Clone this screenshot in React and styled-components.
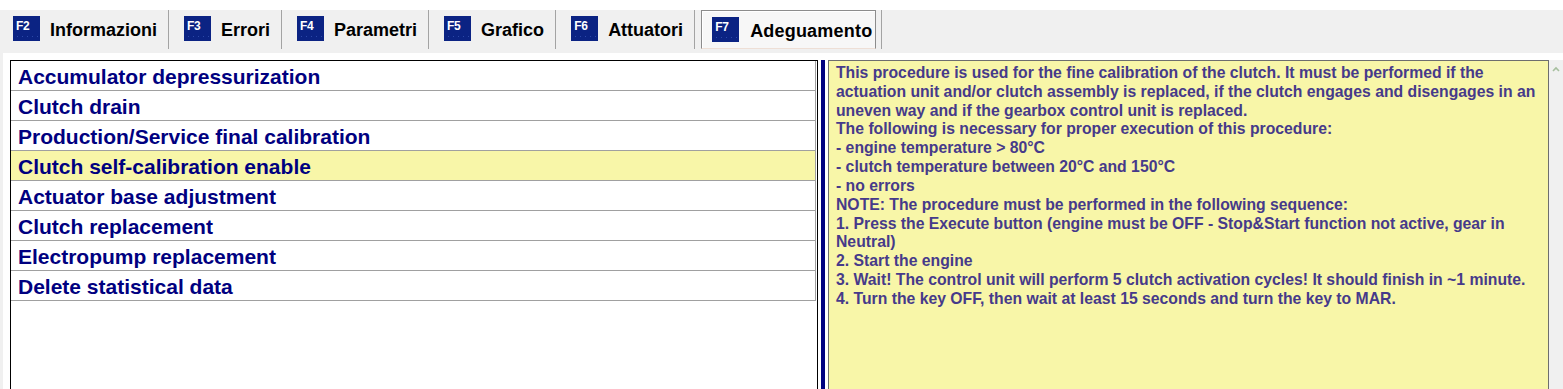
import React from "react";
import styled, { createGlobalStyle } from "styled-components";

const GlobalStyle = createGlobalStyle`
  html, body {
    margin: 0;
    padding: 0;
    background: #ffffff;
    font-family: "Liberation Sans", Arial, sans-serif;
  }
`;

const Page = styled.div`
  width: 1563px;
  height: 389px;
  overflow: hidden;
  padding-top: 10px;
  box-sizing: border-box;
  background: #ffffff;
`;

// tab strip
const TabBar = styled.div`
  display: flex;
  align-items: flex-start;
  height: 43px;
  background: #f0f0f0;
`;

const Tab = styled.div`
  display: flex;
  align-items: flex-start;
  height: 39px;
  box-sizing: border-box;
  padding: ${(p) => (p.$active ? "0 5px 0 6px" : p.$first ? "0 11px 0 13px" : "0 11px 0 15px")};
  border-right: 1px solid #a3a3a3;
`;

const ActiveBox = styled.div`
  display: flex;
  align-items: flex-start;
  height: 39px;
  box-sizing: border-box;
  padding: 0 3px 0 10px;
  background: #f7f7f7;
  border: 1px solid #8c8c8c;
  border-bottom-color: #eedfd6;
  box-shadow: inset 1px 1px 0 #ffffff;
`;

const KeyIcon = styled.div`
  width: 27px;
  height: 25px;
  margin-top: 6px;
  box-sizing: border-box;
  padding: 4px 0 0 3px;
  background-color: #0b2383;
  background-image: radial-gradient(circle, #2a47a8 0.7px, transparent 0.9px);
  background-size: 5px 3px;
  background-position: 2px 19px;
  background-repeat: repeat-x;
  color: #ffffff;
  font-size: 12px;
  line-height: 12px;
  font-weight: bold;
  letter-spacing: -0.3px;
`;

const TabLabel = styled.span`
  margin: 9px 0 0 ${(p) => (p.$active ? "11px" : "10px")};
  font-size: 18px;
  line-height: 22px;
  font-weight: bold;
  color: #000000;
  white-space: nowrap;
  letter-spacing: ${(p) => (p.$active ? "0.2px" : "0")};
`;

// body
const Body = styled.div`
  background: #f0f0f0;
  height: 336px;
`;

const Content = styled.div`
  display: flex;
  align-items: stretch;
  margin-left: 3px;
  height: 100%;
  box-sizing: border-box;
  padding: 7px 0 0 7px;
  background: #ffffff;
`;

const ListPanel = styled.div`
  width: 808px;
  box-sizing: border-box;
  border: 1px solid #000000;
  border-bottom: none;
  background: #ffffff;
`;

const Row = styled.div`
  height: 30px;
  box-sizing: border-box;
  padding: 3px 0 0 7px;
  margin-right: 1px;
  line-height: 25px;
  font-size: 21px;
  font-weight: bold;
  color: #000080;
  background: ${(p) => (p.$selected ? "#f8f6a8" : "#ffffff")};
  border-bottom: 1px solid #a0a0a0;
  border-right: 1px solid #a0a0a0;
  white-space: nowrap;
`;

const Divider = styled.div`
  width: 4px;
  margin: 0 3px;
  background: #000080;
`;

const InfoPanel = styled.div`
  width: 721px;
  box-sizing: border-box;
  border: 1px solid #6e6e6e;
  border-bottom: none;
  background: #f8f6a8;
  padding: 3px 0 0 7px;
  color: #463a8a;
  font-size: 15.75px;
  line-height: 18.83px;
  font-weight: bold;
`;

const InfoLine = styled.div`
  white-space: nowrap;
`;

const ScrollTrack = styled.div`
  width: 14px;
  background: #f0f0f0;
  display: flex;
  justify-content: center;
  padding-top: 6px;
  box-sizing: border-box;
`;

const procedures = [
  "Accumulator depressurization",
  "Clutch drain",
  "Production/Service final calibration",
  "Clutch self-calibration enable",
  "Actuator base adjustment",
  "Clutch replacement",
  "Electropump replacement",
  "Delete statistical data",
];

const tabs = [
  { key: "F2", label: "Informazioni" },
  { key: "F3", label: "Errori" },
  { key: "F4", label: "Parametri" },
  { key: "F5", label: "Grafico" },
  { key: "F6", label: "Attuatori" },
  { key: "F7", label: "Adeguamento", active: true },
];

const info = [
  "This procedure is used for the fine calibration of the clutch. It must be performed if the",
  "actuation unit and/or clutch assembly is replaced, if the clutch engages and disengages in an",
  "uneven way and if the gearbox control unit is replaced.",
  "The following is necessary for proper execution of this procedure:",
  "- engine temperature > 80°C",
  "- clutch temperature between 20°C and 150°C",
  "- no errors",
  "NOTE:  The procedure must be performed in the following sequence:",
  "1. Press the Execute button (engine must be OFF - Stop&Start function not active, gear in",
  "Neutral)",
  "2. Start the engine",
  "3. Wait! The control unit will perform 5 clutch activation cycles! It should finish in ~1 minute.",
  "4. Turn the key OFF, then wait at least 15 seconds and turn the key to MAR.",
];

export default function App() {
  return (
    <>
      <GlobalStyle />
      <Page>
        <TabBar>
          {tabs.map((t, i) =>
            t.active ? (
              <Tab key={t.key} $active>
                <ActiveBox>
                  <KeyIcon>{t.key}</KeyIcon>
                  <TabLabel $active>{t.label}</TabLabel>
                </ActiveBox>
              </Tab>
            ) : (
              <Tab key={t.key} $first={i === 0}>
                <KeyIcon>{t.key}</KeyIcon>
                <TabLabel>{t.label}</TabLabel>
              </Tab>
            )
          )}
        </TabBar>
        <Body>
          <Content>
            <ListPanel>
              {procedures.map((p, i) => (
                <Row key={p} $selected={i === 3}>
                  {p}
                </Row>
              ))}
            </ListPanel>
            <Divider />
            <InfoPanel>
              {info.map((line, i) => (
                <InfoLine key={i}>{line}</InfoLine>
              ))}
            </InfoPanel>
            <ScrollTrack>
              <svg width="8" height="6" viewBox="0 0 8 6">
                <polyline
                  points="1,5 4,2 7,5"
                  fill="none"
                  stroke="#a6bf9e"
                  strokeWidth="1.6"
                />
              </svg>
            </ScrollTrack>
          </Content>
        </Body>
      </Page>
    </>
  );
}
